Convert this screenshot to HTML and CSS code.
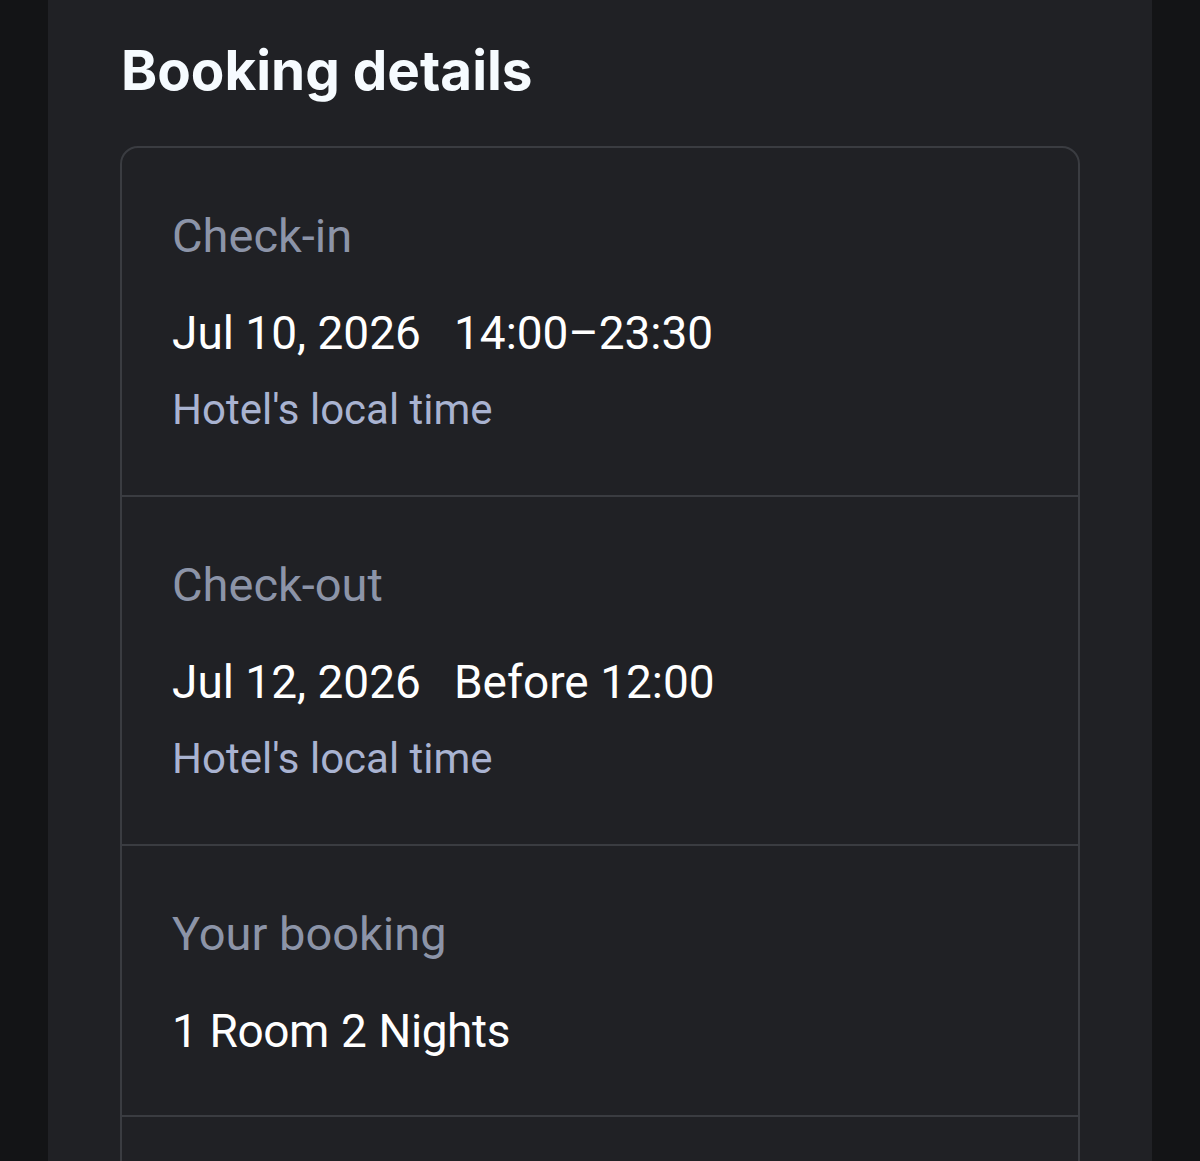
FILE: index.html
```html
<!DOCTYPE html>
<html lang="en">
<head>
  <meta charset="UTF-8">
  <meta name="viewport" content="width=device-width, initial-scale=1.0">
  <title>Booking details</title>
  <link rel="stylesheet" href="styles.css">
</head>
<body>
  <main class="panel">
    <h1>Booking details</h1>

    <div class="card">
      <section class="row">
        <p class="label">Check-in</p>
        <p class="value"><span>Jul 10, 2026</span><span>14:00–23:30</span></p>
        <p class="note">Hotel's local time</p>
      </section>

      <section class="row">
        <p class="label">Check-out</p>
        <p class="value"><span>Jul 12, 2026</span><span>Before 12:00</span></p>
        <p class="note">Hotel's local time</p>
      </section>

      <section class="row short">
        <p class="label">Your booking</p>
        <p class="value plain">1 Room 2 Nights</p>
      </section>

      <section class="row"></section>
    </div>
  </main>
</body>
</html>
```

FILE: styles.css
```css
html, body {
  margin: 0;
  height: 100%;
}

body {
  font-family: Roboto, "Noto Sans", sans-serif;
  background-color: #131416;
  color: #fff;
  overflow: hidden;
}

.panel {
  margin: 0 48px;
  min-height: 100%;
  background-color: #202125;
  padding: 38px 72px 0;
}

h1 {
  margin: 0 0 44px;
  font-family: Inter, Roboto, sans-serif;
  font-size: 54.8px;
  line-height: 64px;
  font-weight: 700;
  color: #f6fbff;
  padding-left: 1px;
}

.card {
  border: 2px solid #3a3c41;
  border-radius: 18px;
  overflow: hidden;
}

.row {
  padding: 60px 50px 0;
  height: 349px;
  box-sizing: border-box;
  border-bottom: 2px solid #3a3c41;
}

.row.short {
  height: 271px;
}

.row p {
  margin: 0;
}

.label {
  font-size: 47px;
  line-height: 56px;
  color: #8c94a8;
}

.value {
  margin-top: 41px !important;
  font-size: 46px;
  line-height: 56px;
  display: flex;
  gap: 33px;
}

.value.plain {
  display: block;
  letter-spacing: -0.4px;
  word-spacing: 1px;
}

.note {
  margin-top: 24px !important;
  font-size: 42px;
  line-height: 50px;
  color: #a9b3d1;
}
```
